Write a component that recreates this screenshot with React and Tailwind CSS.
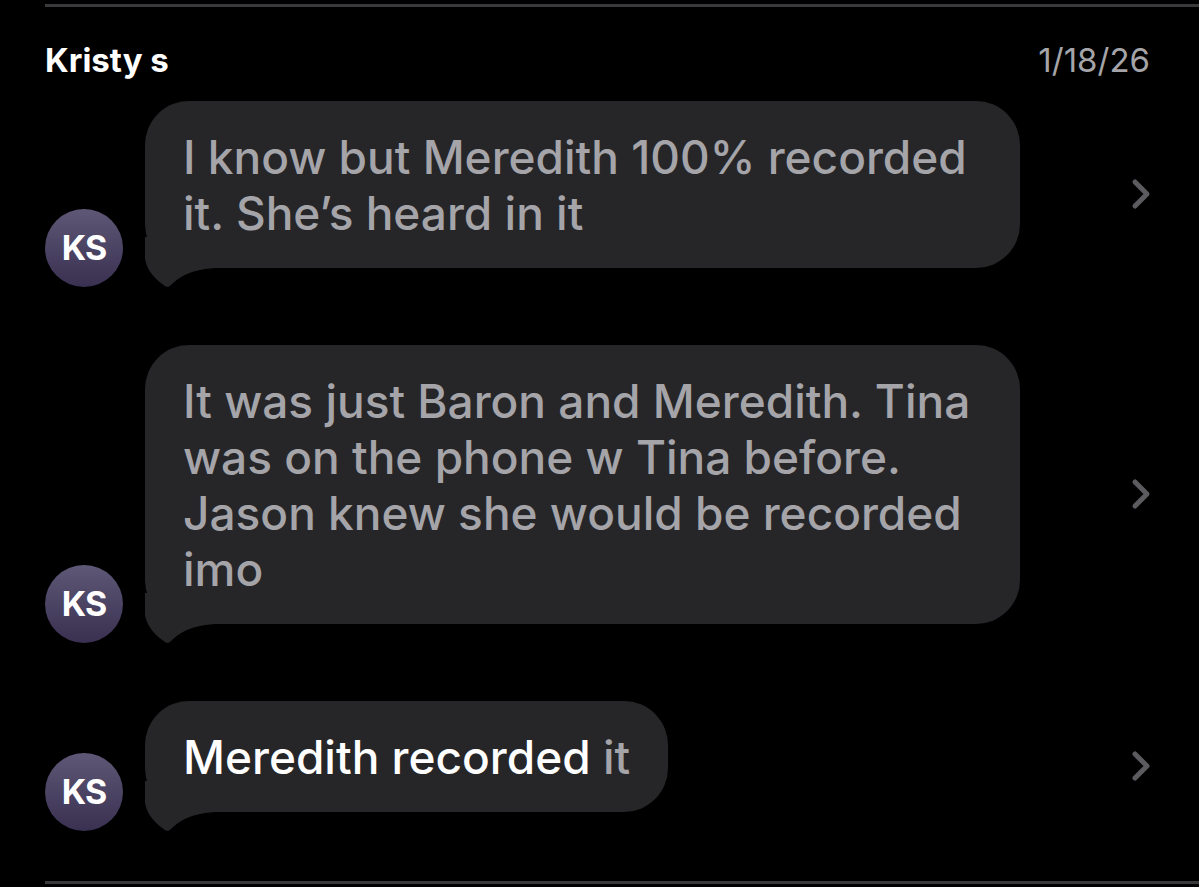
import React from 'react';

const messages = [
  {
    id: 1,
    lines: ['I know but Meredith 100% recorded', 'it. She’s heard in it'],
    wide: true,
  },
  {
    id: 2,
    lines: [
      'It was just Baron and Meredith. Tina',
      'was on the phone w Tina before.',
      'Jason knew she would be recorded',
      'imo',
    ],
    wide: true,
  },
  { id: 3, highlight: 'Meredith recorded', rest: ' it' },
];

const Avatar = () => (
  <div className="w-[78px] h-[78px] shrink-0 rounded-full bg-gradient-to-b from-[#5e5876] to-[#3a3051] flex items-center justify-center">
    <span className="text-white font-bold text-[34px] tracking-[-1px] leading-none">KS</span>
  </div>
);

const Tail = () => (
  <svg
    className="absolute left-0 bottom-[-19px]"
    width="70"
    height="50"
    viewBox="0 0 70 50"
  >
    <path
      d="M0 0 V22 C2 34 11 43 20 49 C22 50.5 24 50 26 48 C33 41 42 35 60 32 L70 31 V0 Z"
      fill="#262629"
    />
  </svg>
);

const Chevron = () => (
  <svg width="22" height="34" viewBox="0 0 22 34" className="shrink-0">
    <path
      d="M5 5 L17 17 L5 29"
      fill="none"
      stroke="#5b5b60"
      strokeWidth="5"
      strokeLinecap="round"
      strokeLinejoin="round"
    />
  </svg>
);

const Bubble = ({ msg }) => (
  <div
    className={`relative ml-[22px] mb-[19px] rounded-[44px] bg-[#262629] pl-[38px] pr-[38px] pt-[28px] pb-[27px] text-[46px] font-medium leading-[56px] ${
      msg.wide ? 'w-[875px]' : ''
    }`}
  >
    <Tail />
    <div className="relative">
      {msg.lines ? (
        msg.lines.map((line) => (
          <div key={line} className="text-[#a4a4a9] whitespace-nowrap">
            {line}
          </div>
        ))
      ) : (
        <div className="whitespace-nowrap">
          <span className="text-white">{msg.highlight}</span>
          <span className="text-[#a4a4a9]">{msg.rest}</span>
        </div>
      )}
    </div>
  </div>
);

export default function App() {
  return (
    <div
      className="w-[1199px] h-[887px] bg-black overflow-hidden"
      style={{ fontFamily: 'Inter, "Noto Sans", sans-serif' }}
    >
      <div className="ml-[45px] mt-[4px] h-[3px] bg-[#3a3a3c]" />

      <div className="flex items-center justify-between pl-[45px] pr-[49px] mt-[29px]">
        <span className="text-white font-bold text-[33px] leading-[48px]">Kristy s</span>
        <span className="text-[#a4a4a9] text-[33px] leading-[48px]">1/18/26</span>
      </div>

      <div className="mt-[17px] flex flex-col gap-[58px]">
        {messages.map((msg) => (
          <div key={msg.id} className="flex items-center pl-[45px] pr-[47px]">
            <div className="flex flex-1 items-end">
              <Avatar />
              <Bubble msg={msg} />
            </div>
            <Chevron />
          </div>
        ))}
      </div>

      <div className="ml-[45px] mt-[50px] h-[3px] bg-[#3a3a3c]" />
    </div>
  );
}
